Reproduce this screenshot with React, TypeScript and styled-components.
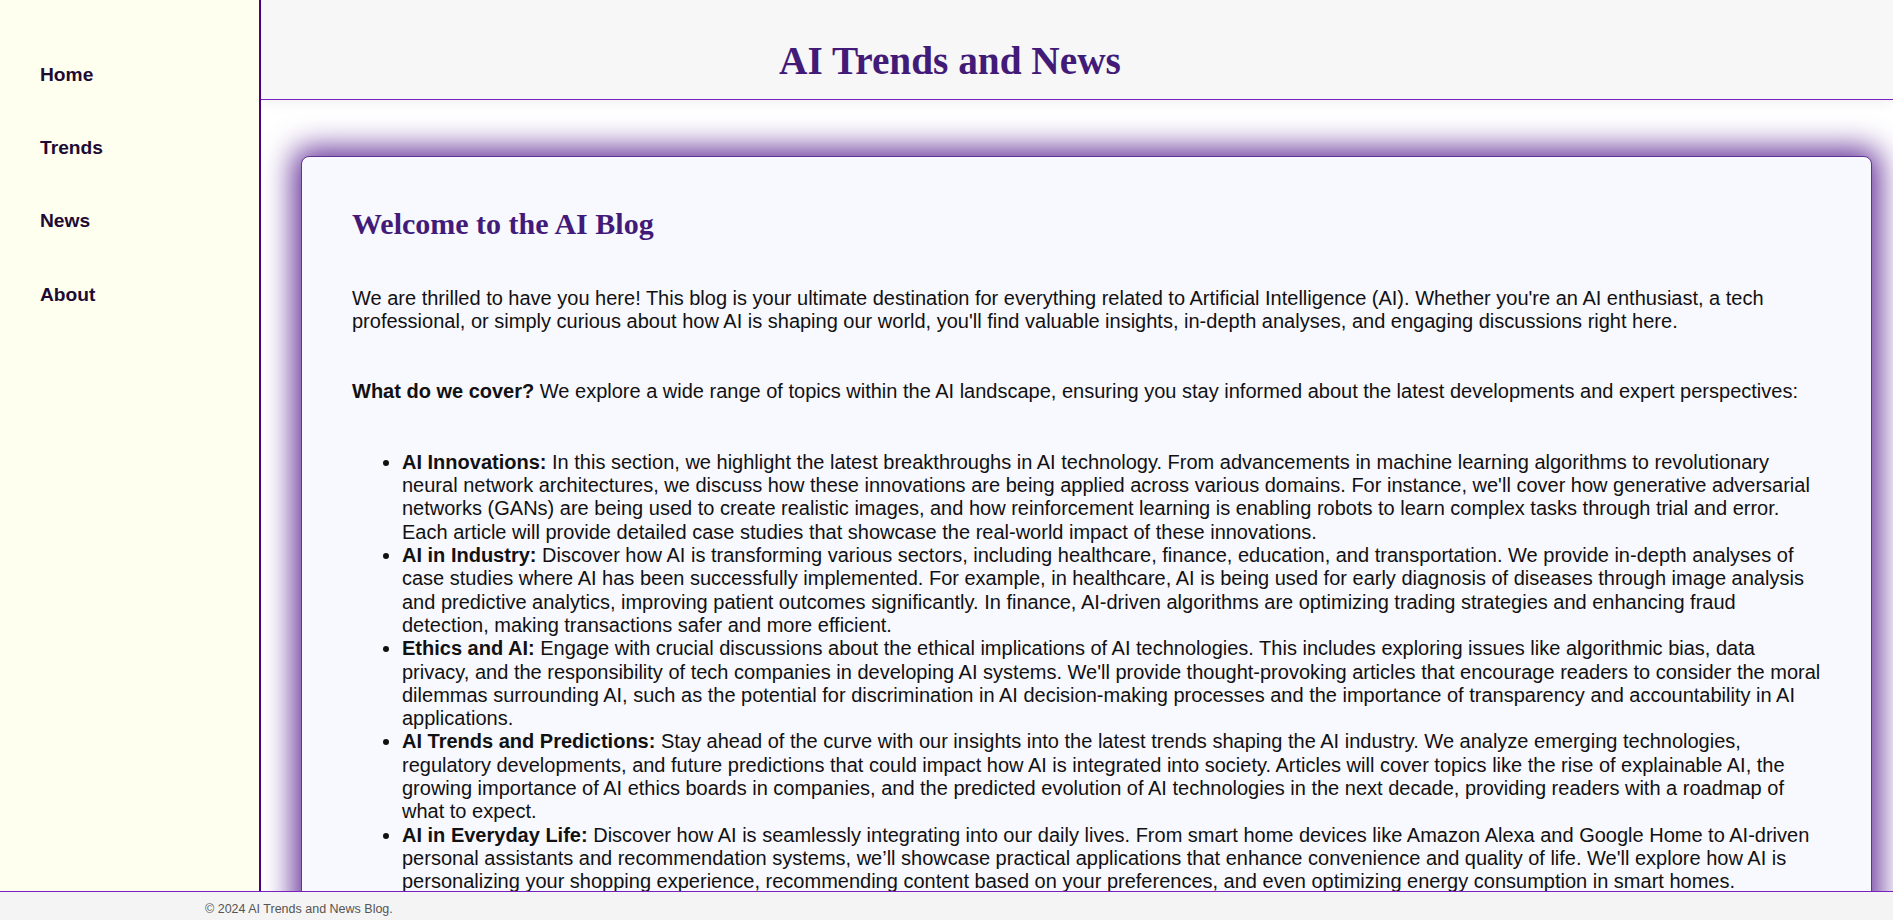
import React from "react";
import styled, { createGlobalStyle } from "styled-components";

const GlobalStyle = createGlobalStyle`
  html, body {
    margin: 0;
    padding: 0;
    height: 100%;
    overflow: hidden;
  }
  body {
    font-family: "Liberation Sans", Arial, sans-serif;
    background: #ffffff;
  }
  #root {
    height: 100%;
  }
`;

const Page = styled.div`
  display: flex;
  flex-direction: column;
  height: 100vh;
`;

const Body = styled.div`
  flex: 1;
  min-height: 0;
  display: flex;
  overflow: hidden;
`;

const Sidebar = styled.nav`
  width: 259px;
  flex-shrink: 0;
  background: #fffff0;
  border-right: 2px solid #4b0082;
  box-sizing: content-box;
`;

const NavList = styled.ul`
  list-style: none;
  margin: 0;
  padding: 64px 0 0 40px;
  display: flex;
  flex-direction: column;
  gap: 51.2px;
`;

const NavLink = styled.a`
  display: block;
  font-family: "Liberation Sans", Arial, sans-serif;
  font-size: 19.2px;
  font-weight: bold;
  color: #1e0b33;
  text-decoration: none;
  line-height: normal;
`;

const Main = styled.main`
  flex: 1;
  min-width: 0;
  display: flex;
  flex-direction: column;
  overflow: hidden;
  background: #ffffff;
`;

const Header = styled.header`
  flex-shrink: 0;
  height: 100px;
  box-sizing: border-box;
  background: #f7f7f7;
  border-bottom: 1px solid #7a1fc0;
  box-shadow: 0 2px 14px rgba(0, 0, 0, 0.07);
  padding: 38px 254px 0 0;
  position: relative;
  z-index: 1;
`;

const Title = styled.h1`
  margin: 0;
  text-align: center;
  font-family: "Liberation Serif", "Times New Roman", serif;
  font-size: 39.3px;
  font-weight: bold;
  color: #421b79;
  line-height: normal;
`;

const Content = styled.div`
  padding: 56px 21px 0 40px;
`;

const Card = styled.article`
  background: #f8f8ff;
  border: 1px solid #5e3592;
  border-radius: 8px;
  box-shadow: 0 0 30px 8px #663399;
  padding: 50px;
  color: #111111;
`;

const CardTitle = styled.h2`
  margin: 0 0 46px;
  font-family: "Liberation Serif", "Times New Roman", serif;
  font-size: 30px;
  font-weight: bold;
  color: #421b79;
  line-height: normal;
`;

const Paragraph = styled.p`
  margin: 46px 0;
  font-size: 20px;
  line-height: 23.3px;
`;

const TopicList = styled.ul`
  margin: 48px 0;
  padding-left: 50px;
  font-size: 20px;
  line-height: 23.3px;
`;

const Topic = styled.li`
  margin: 0;
`;

const Footer = styled.footer`
  flex-shrink: 0;
  height: 29px;
  box-sizing: border-box;
  background: #f4f4f4;
  border-top: 1px solid #7a1fc0;
  padding: 10px 0 0 205px;
  font-family: "Liberation Sans", Arial, sans-serif;
  font-size: 12.5px;
  color: #555555;
  line-height: normal;
  position: relative;
  z-index: 2;
`;

const navItems = ["Home", "Trends", "News", "About"];

const topics: { title: string; text: string }[] = [
  {
    title: "AI Innovations:",
    text:
      "In this section, we highlight the latest breakthroughs in AI technology. From advancements in machine learning algorithms to revolutionary neural network architectures, we discuss how these innovations are being applied across various domains. For instance, we'll cover how generative adversarial networks (GANs) are being used to create realistic images, and how reinforcement learning is enabling robots to learn complex tasks through trial and error. Each article will provide detailed case studies that showcase the real-world impact of these innovations.",
  },
  {
    title: "AI in Industry:",
    text:
      "Discover how AI is transforming various sectors, including healthcare, finance, education, and transportation. We provide in-depth analyses of case studies where AI has been successfully implemented. For example, in healthcare, AI is being used for early diagnosis of diseases through image analysis and predictive analytics, improving patient outcomes significantly. In finance, AI-driven algorithms are optimizing trading strategies and enhancing fraud detection, making transactions safer and more efficient.",
  },
  {
    title: "Ethics and AI:",
    text:
      "Engage with crucial discussions about the ethical implications of AI technologies. This includes exploring issues like algorithmic bias, data privacy, and the responsibility of tech companies in developing AI systems. We'll provide thought-provoking articles that encourage readers to consider the moral dilemmas surrounding AI, such as the potential for discrimination in AI decision-making processes and the importance of transparency and accountability in AI applications.",
  },
  {
    title: "AI Trends and Predictions:",
    text:
      "Stay ahead of the curve with our insights into the latest trends shaping the AI industry. We analyze emerging technologies, regulatory developments, and future predictions that could impact how AI is integrated into society. Articles will cover topics like the rise of explainable AI, the growing importance of AI ethics boards in companies, and the predicted evolution of AI technologies in the next decade, providing readers with a roadmap of what to expect.",
  },
  {
    title: "AI in Everyday Life:",
    text:
      "Discover how AI is seamlessly integrating into our daily lives. From smart home devices like Amazon Alexa and Google Home to AI-driven personal assistants and recommendation systems, we\u2019ll showcase practical applications that enhance convenience and quality of life. We'll explore how AI is personalizing your shopping experience, recommending content based on your preferences, and even optimizing energy consumption in smart homes.",
  },
];

export default function App() {
  return (
    <>
      <GlobalStyle />
      <Page>
        <Body>
          <Sidebar>
            <NavList>
              {navItems.map((item) => (
                <li key={item}>
                  <NavLink href="#">{item}</NavLink>
                </li>
              ))}
            </NavList>
          </Sidebar>
          <Main>
            <Header>
              <Title>AI Trends and News</Title>
            </Header>
            <Content>
              <Card>
                <CardTitle>Welcome to the AI Blog</CardTitle>
                <Paragraph>
                  We are thrilled to have you here! This blog is your ultimate destination for
                  everything related to Artificial Intelligence (AI). Whether you're an AI
                  enthusiast, a tech professional, or simply curious about how AI is shaping our
                  world, you'll find valuable insights, in-depth analyses, and engaging discussions
                  right here.
                </Paragraph>
                <Paragraph>
                  <strong>What do we cover?</strong> We explore a wide range of topics within the AI
                  landscape, ensuring you stay informed about the latest developments and expert
                  perspectives:
                </Paragraph>
                <TopicList>
                  {topics.map((t) => (
                    <Topic key={t.title}>
                      <strong>{t.title}</strong> {t.text}
                    </Topic>
                  ))}
                </TopicList>
                <Paragraph>
                  Join our community of AI enthusiasts and stay up to date with the latest news,
                  trends and insights from the world of Artificial Intelligence.
                </Paragraph>
              </Card>
            </Content>
          </Main>
        </Body>
        <Footer>© 2024 AI Trends and News Blog.</Footer>
      </Page>
    </>
  );
}
